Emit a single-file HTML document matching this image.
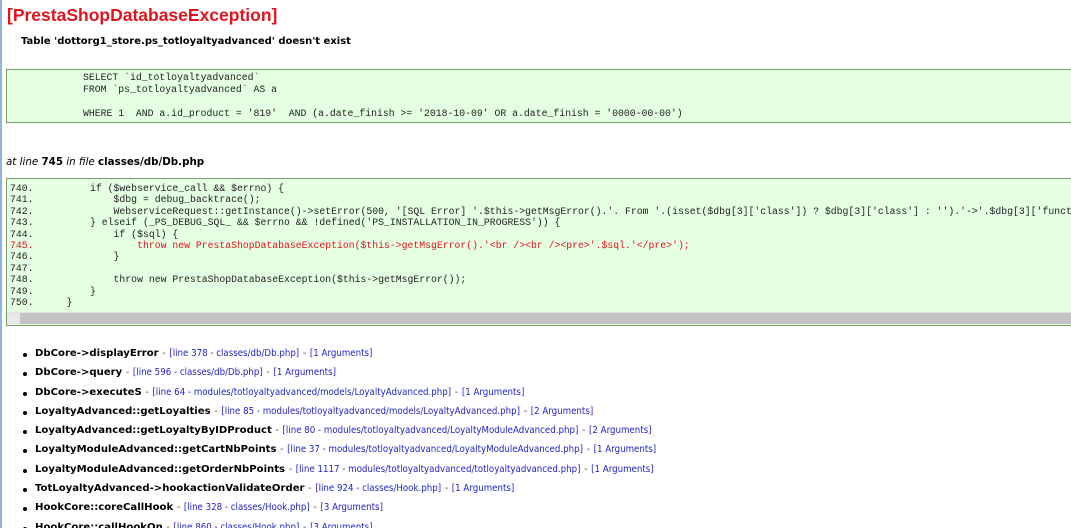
<!DOCTYPE html>
<html><head><meta charset="utf-8"><style>
*{margin:0;padding:0}
html,body{width:1071px;height:528px;overflow:hidden;background:#fff}
body{position:relative;font-family:"DejaVu Sans","Liberation Sans",sans-serif;color:#000}
.bl{position:absolute;left:0;top:0;width:2px;height:528px;background:#8fb4d9}
.t{position:absolute;left:7px;top:5px;font-family:"Liberation Sans",sans-serif;font-size:17.5px;font-weight:bold;color:#e0141e;white-space:nowrap}
.s{position:absolute;left:21px;top:36px;font-size:10px;font-weight:bold;white-space:nowrap}
.box{position:absolute;left:6px;width:1100px;background:#e5ffe2;border:1px solid #7c9a6a;overflow:hidden}
pre{font-family:"Liberation Mono",monospace;font-size:9.8px;color:#222;white-space:pre}
.at{position:absolute;left:6px;top:156px;font-size:10.3px;font-style:italic;white-space:nowrap}
.at b{font-style:normal}
.r{color:#e0141e}
.ln{position:absolute;left:3px;top:4px;line-height:11.4px}
.cd{position:absolute;left:36px;top:4px;line-height:11.4px}
.sb{position:absolute;left:0;top:133px;width:1100px;height:11px;background:#c4c4c4;border-top:1px solid #e2e2e2}
.sb i{position:absolute;left:0;top:0;width:13px;height:11px;background:#e8e8e8}
ul{position:absolute;left:21px;top:348px;list-style:none}
li{height:19.3px;font-size:10.1px;font-weight:bold;white-space:nowrap;position:relative;padding-left:14px}
li:before{content:"";position:absolute;left:2px;top:5px;width:4px;height:4px;border-radius:50%;background:#000}
li span{font-weight:normal;font-size:9.65px;color:#2323c8;font-family:"DejaVu Sans Condensed","DejaVu Sans",sans-serif}
li em{font-style:normal;font-weight:normal;color:#555}
</style></head><body>
<div class="bl"></div>
<div class="t">[PrestaShopDatabaseException]</div>
<div class="s">Table 'dottorg1_store.ps_totloyaltyadvanced' doesn't exist</div>
<div class="box" style="top:69px;height:52px"><pre style="padding:2px 0 0 76px;line-height:12px">SELECT `id_totloyaltyadvanced`
FROM `ps_totloyaltyadvanced` AS a

WHERE 1  AND a.id_product = '819'  AND (a.date_finish &gt;= '2018-10-09' OR a.date_finish = '0000-00-00')</pre></div>
<div class="at">at line <b>745</b> in file <b>classes/db/Db.php</b></div>
<div class="box" style="top:178px;height:146px"><pre class="ln">740.
741.
742.
743.
744.
<span class="r">745.</span>
746.
747.
748.
749.
750.</pre><pre class="cd">        if ($webservice_call &amp;&amp; $errno) {
            $dbg = debug_backtrace();
            WebserviceRequest::getInstance()-&gt;setError(500, '[SQL Error] '.$this-&gt;getMsgError().'. From '.(isset($dbg[3]['class']) ? $dbg[3]['class'] : '').'-&gt;'.$dbg[3]['function'].'() Query was : '.$sql, 97);
        } elseif (_PS_DEBUG_SQL_ &amp;&amp; $errno &amp;&amp; !defined('PS_INSTALLATION_IN_PROGRESS')) {
            if ($sql) {
<span class="r">                throw new PrestaShopDatabaseException($this-&gt;getMsgError().'&lt;br /&gt;&lt;br /&gt;&lt;pre&gt;'.$sql.'&lt;/pre&gt;');</span>
            }

            throw new PrestaShopDatabaseException($this-&gt;getMsgError());
        }
    }</pre><div class="sb"><i></i></div></div>
<ul>
<li>DbCore-&gt;displayError <em>-</em> <span>[line 378 - classes/db/Db.php]</span> <em>-</em> <span>[1 Arguments]</span></li>
<li>DbCore-&gt;query <em>-</em> <span>[line 596 - classes/db/Db.php]</span> <em>-</em> <span>[1 Arguments]</span></li>
<li>DbCore-&gt;executeS <em>-</em> <span>[line 64 - modules/totloyaltyadvanced/models/LoyaltyAdvanced.php]</span> <em>-</em> <span>[1 Arguments]</span></li>
<li>LoyaltyAdvanced::getLoyalties <em>-</em> <span>[line 85 - modules/totloyaltyadvanced/models/LoyaltyAdvanced.php]</span> <em>-</em> <span>[2 Arguments]</span></li>
<li>LoyaltyAdvanced::getLoyaltyByIDProduct <em>-</em> <span>[line 80 - modules/totloyaltyadvanced/LoyaltyModuleAdvanced.php]</span> <em>-</em> <span>[2 Arguments]</span></li>
<li>LoyaltyModuleAdvanced::getCartNbPoints <em>-</em> <span>[line 37 - modules/totloyaltyadvanced/LoyaltyModuleAdvanced.php]</span> <em>-</em> <span>[1 Arguments]</span></li>
<li>LoyaltyModuleAdvanced::getOrderNbPoints <em>-</em> <span>[line 1117 - modules/totloyaltyadvanced/totloyaltyadvanced.php]</span> <em>-</em> <span>[1 Arguments]</span></li>
<li>TotLoyaltyAdvanced-&gt;hookactionValidateOrder <em>-</em> <span>[line 924 - classes/Hook.php]</span> <em>-</em> <span>[1 Arguments]</span></li>
<li>HookCore::coreCallHook <em>-</em> <span>[line 328 - classes/Hook.php]</span> <em>-</em> <span>[3 Arguments]</span></li>
<li>HookCore::callHookOn <em>-</em> <span>[line 860 - classes/Hook.php]</span> <em>-</em> <span>[3 Arguments]</span></li>
</ul>
</body></html>
